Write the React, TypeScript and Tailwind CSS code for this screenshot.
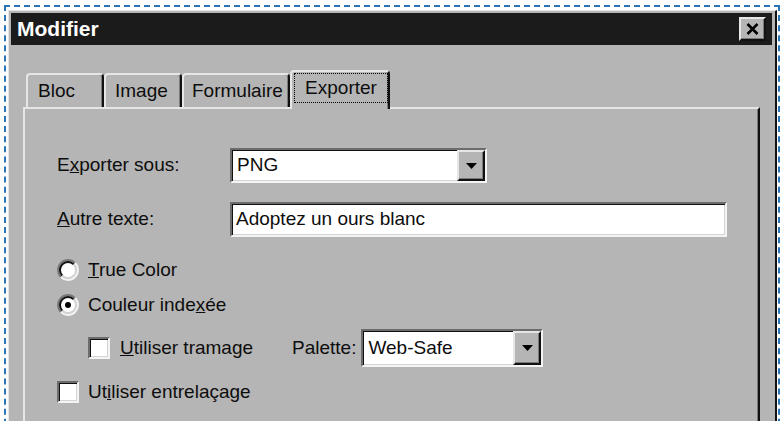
import React from 'react';

const raised =
  'border-2 border-t-[#e6e6e6] border-l-[#e6e6e6] border-r-[#111] border-b-[#111] shadow-[inset_-1px_-1px_0_#7a7a7a]';
const sunken =
  'border-2 border-t-[#6c6c6c] border-l-[#6c6c6c] border-r-[#f4f4f4] border-b-[#f4f4f4] shadow-[inset_1px_1px_0_#111,inset_-1px_-1px_0_#d4d4d4]';

const Arrow = () => (
  <svg width="11" height="6" viewBox="0 0 11 6">
    <path d="M0 0H11L5.5 6Z" fill="#000" />
  </svg>
);

const Select = ({ value, className }: { value: string; className: string }) => (
  <div className={`flex items-stretch bg-white ${sunken} ${className}`}>
    <span className="flex-1 flex items-center pl-[5px]">{value}</span>
    <div className={`w-[28px] bg-[#b5b5b5] flex items-center justify-center ${raised}`}>
      <Arrow />
    </div>
  </div>
);

const Radio = ({ checked }: { checked?: boolean }) => (
  <svg width="22" height="22" viewBox="0 0 22 22" className="shrink-0">
    <circle cx="11" cy="11" r="8" fill="#fff" />
    <path d="M3.93 18.07A10 10 0 0 1 18.07 3.93" stroke="#777" strokeWidth="2" fill="none" />
    <path d="M18.07 3.93A10 10 0 0 1 3.93 18.07" stroke="#f4f4f4" strokeWidth="2" fill="none" />
    <path d="M5.34 16.66A8 8 0 0 1 16.66 5.34" stroke="#111" strokeWidth="2" fill="none" />
    <path d="M16.66 5.34A8 8 0 0 1 5.34 16.66" stroke="#d4d4d4" strokeWidth="2" fill="none" />
    {checked && <circle cx="11" cy="11" r="3" fill="#000" />}
  </svg>
);

const Checkbox = () => <div className={`w-[22px] h-[22px] shrink-0 bg-white ${sunken}`} />;

const Tab = ({ label, w, pl }: { label: string; w: string; pl: string }) => (
  <div
    className={`${w} ${pl} h-[34px] flex items-center border-t-2 border-l-2 border-r-2 border-t-[#e6e6e6] border-l-[#e6e6e6] border-r-[#111] rounded-t-[4px] shadow-[inset_-1px_0_0_#7a7a7a]`}
  >
    {label}
  </div>
);

export default function App() {
  return (
    <div className="w-[784px] h-[421px] overflow-hidden bg-white font-['Liberation_Sans',Arial,sans-serif] text-[19px] text-[#0d0d0d]">
      <div className="mx-[4px] mt-[5px] h-[440px] border-2 border-dashed border-[#2b74b6]">
        <div className="ml-[2px] mt-[3px] w-[769px] h-[440px] bg-[#b5b5b5] border-t border-l border-[#e6e6e6] border-r-2 border-r-[#111] pl-[2px] pr-[3px] pt-[2px]">
          {/* title bar */}
          <div className="h-[32px] bg-[#1b1b1b] flex items-center justify-between pl-[6px] pr-[6px]">
            <span className="text-white font-bold text-[21px]">Modifier</span>
            <div className={`w-[27px] h-[24px] bg-[#b5b5b5] flex items-center justify-center ${raised}`}>
              <svg width="13" height="12" viewBox="0 0 13 12">
                <path d="M1.5 1L11.5 11M11.5 1L1.5 11" stroke="#000" strokeWidth="2.6" />
              </svg>
            </div>
          </div>

          <div className="mx-[12px] mt-[25px]">
            {/* tabs */}
            <div className="relative z-10 flex items-end h-[37px] pl-[3px]">
              <Tab label="Bloc" w="w-[78px]" pl="pl-[10px]" />
              <Tab label="Image" w="w-[78px]" pl="pl-[9px]" />
              <Tab label="Formulaire" w="w-[108px]" pl="pl-[8px]" />
              <div className="w-[100px] h-[39px] -mb-[2px] bg-[#b5b5b5] border-t-2 border-l-2 border-r-2 border-t-[#e6e6e6] border-l-[#e6e6e6] border-r-[#111] rounded-t-[4px] shadow-[inset_-1px_0_0_#7a7a7a] pt-[1px] pl-[2px]">
                <div className="w-[94px] h-[30px] border border-dotted border-black flex items-center justify-center">
                  Exporter
                </div>
              </div>
            </div>

            {/* panel */}
            <div className="h-[320px] border-t-2 border-l-2 border-r-2 border-t-[#e6e6e6] border-l-[#e6e6e6] border-r-[#111] shadow-[inset_-1px_0_0_#7a7a7a] pl-[32px] pt-[39px]">
              <div className="flex items-center h-[35px]">
                <span className="w-[173px]">
                  E<u>x</u>porter sous:
                </span>
                <Select value="PNG" className="w-[257px] h-[35px]" />
              </div>

              <div className="flex items-center h-[35px] mt-[19px]">
                <span className="w-[173px]">
                  <u>A</u>utre texte:
                </span>
                <div className={`w-[497px] h-[35px] bg-white flex items-center pl-[4px] ${sunken}`}>
                  Adoptez un ours blanc
                </div>
              </div>

              <div className="flex items-center h-[24px] mt-[21px]">
                <Radio />
                <span className="ml-[9px]">
                  <u>T</u>rue Color
                </span>
              </div>

              <div className="flex items-center h-[24px] mt-[11px]">
                <Radio checked />
                <span className="ml-[9px]">
                  Couleur inde<u>x</u>ée
                </span>
              </div>

              <div className="flex items-center h-[38px] mt-[12px] pl-[31px]">
                <div className="w-[204px] flex items-center">
                  <Checkbox />
                  <span className="ml-[10px]">
                    <u>U</u>tiliser tramage
                  </span>
                </div>
                <span>Palette:</span>
                <Select value="Web-Safe" className="ml-[5px] w-[182px] h-[38px]" />
              </div>

              <div className="flex items-center h-[24px] mt-[13px]">
                <Checkbox />
                <span className="ml-[9px]">
                  Ut<u>i</u>liser entrelaçage
                </span>
              </div>
            </div>
          </div>
        </div>
      </div>
    </div>
  );
}
